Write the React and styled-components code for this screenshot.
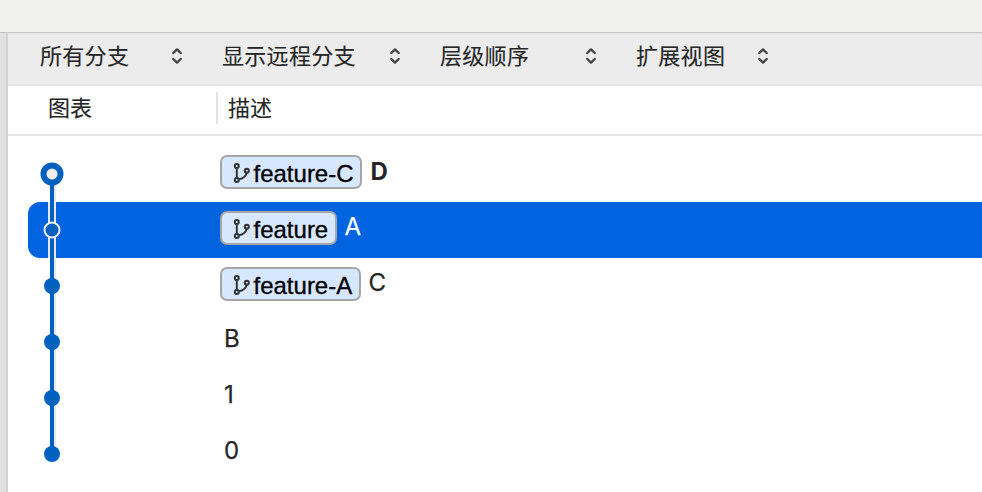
import React from "react";
import styled, { createGlobalStyle, css } from "styled-components";

const Global = createGlobalStyle`
  * { box-sizing: border-box; }
  body {
    margin: 0;
    overflow: hidden;
    font-family: Inter, "Noto Sans CJK SC", sans-serif;
    color: #262626;
  }
`;

const Window = styled.div`
  display: flex;
  flex-direction: column;
  width: 982px;
  height: 492px;
  background: #fff;
`;

const TitleBar = styled.header`
  flex: none;
  height: 33px;
  background: #f0f0ee;
  border-bottom: 1px solid #c4c4c4;
`;

const Body = styled.div`
  display: flex;
  flex: 1;
  min-height: 0;
`;

const Gutter = styled.div`
  flex: none;
  width: 8px;
  background: #e0e0de;
  border-right: 2px solid #d3d3d3;
`;

const Main = styled.main`
  flex: 1;
  min-width: 0;
`;

const Toolbar = styled.div`
  display: flex;
  height: 53px;
  padding-left: 32px;
  background: #ececec;
  border-top: 1px solid #e2e2e2;
  border-bottom: 2px solid #e4e4e4;
`;

const Select = styled.div`
  display: flex;
  justify-content: space-between;
  width: ${(p) => p.$width}px;
  margin-right: ${(p) => p.$gap}px;
  padding-top: 4px;
  font: 22px/32px "Noto Sans CJK SC", sans-serif;
  letter-spacing: 0.3px;
  -webkit-text-stroke: 0.12px currentColor;
  white-space: nowrap;
`;

const ArrowIcon = styled.svg`
  flex: none;
  width: 12px;
  height: 18px;
  margin-top: 9px;
  fill: none;
  stroke: #464646;
  stroke-width: 2.4;
  stroke-linecap: round;
  stroke-linejoin: round;
`;

const TableHead = styled.div`
  display: flex;
  height: 50px;
  border-bottom: 2px solid #e6e6e6;
`;

const HeadCell = styled.div`
  width: ${(p) => p.$width}px;
  height: 32px;
  margin-top: 6px;
  padding-left: ${(p) => p.$pad}px;
  font: 22px/28px "Noto Sans CJK SC", sans-serif;
  -webkit-text-stroke: 0.12px currentColor;
  ${(p) => p.$divided && css`border-right: 2px solid #e2e2e2;`}
`;

const Commits = styled.div`
  padding: 10px 0 0 20px;
`;

const Commit = styled.div`
  display: grid;
  grid-template-columns: 192px 1fr;
  height: 56px;
  color: ${(p) => (p.$selected ? "#fff" : "inherit")};
  background: ${(p) => (p.$selected ? "#0064e1" : "transparent")};
  border-radius: 12px 0 0 12px;
`;

const GraphCell = styled.svg`
  display: block;
  width: 48px;
  height: 56px;
`;

const Description = styled.div`
  display: flex;
  align-items: flex-start;
`;

const Branch = styled.span`
  display: flex;
  width: ${(p) => p.$width}px;
  height: 34px;
  margin: 9px ${(p) => p.$gap}px 0 0;
  padding-left: 11px;
  background: #d6e7ff;
  border: 2px solid #a6a6a6;
  border-radius: 7px;
  color: #000;
  font: 24px/34px "Liberation Sans", Arial, sans-serif;
  -webkit-text-stroke: 0.3px currentColor;
  white-space: nowrap;
`;

const BranchIcon = styled.svg`
  flex: none;
  width: 18px;
  height: 22px;
  margin: 5px 2.5px 0 0;
  fill: none;
  stroke: #333;
  stroke-width: 2;
  stroke-linecap: round;
`;

const Message = styled.span`
  padding-left: ${(p) => p.$indent || 0}px;
  margin-top: ${(p) => (p.$bold ? 10.5 : 10)}px;
  font-size: 24px;
  line-height: 30px;
  font-weight: ${(p) => (p.$bold ? 700 : 400)};
  -webkit-text-stroke: ${(p) => (p.$bold ? 0 : 0.25)}px currentColor;
`;

const filters = [
  { label: "所有分支", width: 143, gap: 39 },
  { label: "显示远程分支", width: 179, gap: 39 },
  { label: "层级顺序", width: 157, gap: 39 },
  { label: "扩展视图", width: 133, gap: 0 },
];

const commits = [
  { branch: "feature-C", width: 142, gap: 8.5, message: "D", head: true },
  { branch: "feature", width: 117, gap: 7.5, message: "A", selected: true },
  { branch: "feature-A", width: 141, gap: 7.5, message: "C" },
  { message: "B" },
  { message: "1" },
  { message: "0" },
];

function Arrows() {
  return (
    <ArrowIcon viewBox="0 0 12 18">
      <path d="M2.3 6 6 2.4 9.7 6M2.3 12l3.7 3.6L9.7 12" />
    </ArrowIcon>
  );
}

function ForkIcon() {
  return (
    <BranchIcon viewBox="0 0 18 22">
      <circle cx="3.8" cy="4" r="2" />
      <circle cx="3.8" cy="18" r="2" />
      <circle cx="13.8" cy="8.8" r="2" />
      <path d="M3.8 6.1v9.8M13.6 10.8C13.2 14.4 10.8 16 5.8 17.4" />
    </BranchIcon>
  );
}

function Graph({ head, last, selected }) {
  const top = head ? 28 : 0;
  const bottom = last ? 28 : 56;
  return (
    <GraphCell viewBox="0 0 48 56">
      <rect x="26" y={top} width="2" height={bottom - top} fill="#e8e8e8" />
      {selected && <rect x="20" width="2" height="56" fill="#e8e8e8" />}
      <rect x="22" y={top} width="4" height={bottom - top} fill="#0060bf" />
      {head ? (
        <circle cx="24" cy="28" r="8.5" fill="#eee" stroke="#0060bf" strokeWidth="6" />
      ) : (
        <circle
          cx="24"
          cy="28"
          r={selected ? 7.5 : 8}
          fill="#0060bf"
          stroke={selected ? "#eee" : "none"}
          strokeWidth="2"
        />
      )}
    </GraphCell>
  );
}

export default function App() {
  return (
    <>
      <Global />
      <Window>
        <TitleBar />
        <Body>
          <Gutter />
          <Main>
            <Toolbar>
              {filters.map((f) => (
                <Select key={f.label} $width={f.width} $gap={f.gap}>
                  {f.label}
                  <Arrows />
                </Select>
              ))}
            </Toolbar>
            <TableHead>
              <HeadCell $width={210} $pad={40} $divided>图表</HeadCell>
              <HeadCell $width={200} $pad={10}>描述</HeadCell>
            </TableHead>
            <Commits>
              {commits.map((c, i) => (
                <Commit key={c.message} $selected={c.selected}>
                  <Graph head={c.head} last={i === commits.length - 1} selected={c.selected} />
                  <Description>
                    {c.branch && (
                      <Branch $width={c.width} $gap={c.gap}>
                        <ForkIcon />
                        {c.branch}
                      </Branch>
                    )}
                    <Message $bold={c.head} $indent={c.branch ? 0 : 4}>{c.message}</Message>
                  </Description>
                </Commit>
              ))}
            </Commits>
          </Main>
        </Body>
      </Window>
    </>
  );
}
